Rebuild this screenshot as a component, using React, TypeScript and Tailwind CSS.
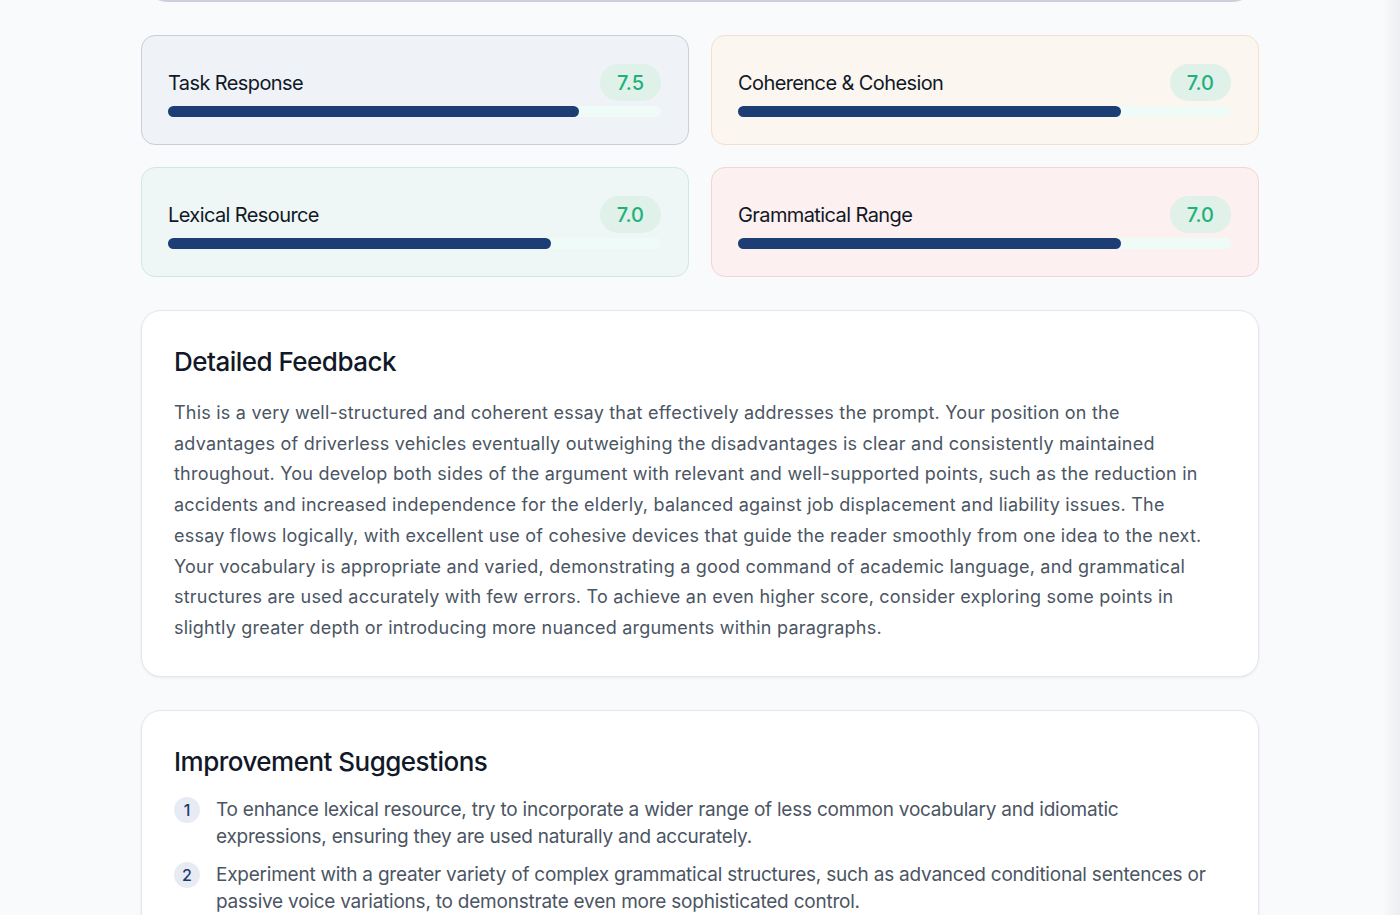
import React from 'react';

interface Criterion {
  name: string;
  score: number;
  card: string;
}

const criteria: Criterion[] = [
  { name: 'Task Response', score: 7.5, card: 'bg-[#eff2f6] border-[#c9ced9]' },
  { name: 'Coherence & Cohesion', score: 7.0, card: 'bg-[#fcf6f1] border-[#f6dfca]' },
  { name: 'Lexical Resource', score: 7.0, card: 'bg-[#eef7f5] border-[#cfe9e2]' },
  { name: 'Grammatical Range', score: 7.0, card: 'bg-[#fcf0f0] border-[#f2d5d5]' },
];

// feedback paragraph, kept in the lines it is set in
const feedbackLines = [
  'This is a very well-structured and coherent essay that effectively addresses the prompt. Your position on the',
  'advantages of driverless vehicles eventually outweighing the disadvantages is clear and consistently maintained',
  'throughout. You develop both sides of the argument with relevant and well-supported points, such as the reduction in',
  'accidents and increased independence for the elderly, balanced against job displacement and liability issues. The',
  'essay flows logically, with excellent use of cohesive devices that guide the reader smoothly from one idea to the next.',
  'Your vocabulary is appropriate and varied, demonstrating a good command of academic language, and grammatical',
  'structures are used accurately with few errors. To achieve an even higher score, consider exploring some points in',
  'slightly greater depth or introducing more nuanced arguments within paragraphs.',
];

const suggestions = [
  'To enhance lexical resource, try to incorporate a wider range of less common vocabulary and idiomatic expressions, ensuring they are used naturally and accurately.',
  'Experiment with a greater variety of complex grammatical structures, such as advanced conditional sentences or passive voice variations, to demonstrate even more sophisticated control.',
];

function ScoreCard({ item }: { item: Criterion }) {
  const pct = (item.score / 9) * 100;
  return (
    <div className={`rounded-[14px] border pl-[26px] pr-[27px] pt-[28px] pb-[27px] ${item.card}`}>
      <div className="flex items-center justify-between">
        <span className="text-[20px] text-[#111827] tracking-[-0.03em]">{item.name}</span>
        <span className="h-[37px] px-[17px] rounded-full bg-[#dff1e9] text-[#1fb07b] text-[20px] font-medium flex items-center">
          {item.score.toFixed(1)}
        </span>
      </div>
      <div className="mt-[5px] h-[11px] rounded-full bg-[#effbf7]">
        <div className="h-full rounded-full bg-[#1d3d75]" style={{ width: `${pct}%` }} />
      </div>
    </div>
  );
}

export default function App() {
  return (
    <div
      className="min-h-screen bg-[#f8fafc] relative overflow-hidden"
      style={{ fontFamily: 'Inter, "Noto Sans", sans-serif' }}
    >
      {/* right scroll gutter shade */}
      <div className="absolute top-0 right-0 h-full w-[18px] bg-gradient-to-r from-transparent to-[#eceef1]" />

      <div className="w-[1118px] mx-auto">
        {/* end of the overall band card above */}
        <div className="-mt-[40px] h-[42px] rounded-b-[22px] border-b-2 border-[#cdd0dc] mx-[4px]" />

        <div className="mt-[33px] grid grid-cols-2 gap-[22px]">
          {criteria.map((c) => (
            <ScoreCard key={c.name} item={c} />
          ))}
        </div>

        <div className="mt-[33px] bg-white rounded-[20px] border border-[#e4e6ea] shadow-[0_1px_3px_rgba(0,0,0,0.06)] pl-[32px] pr-[32px] pt-[33px] pb-[32px]">
          <h2 className="text-[26px] font-medium text-[#111827] tracking-[-0.02em] leading-[36px]">Detailed Feedback</h2>
          <p className="mt-[18px] text-[18px] leading-[30.7px] text-[#4b5563] tracking-[0.012em]">
            {feedbackLines.map((line, i) => (
              <span key={i} className="block whitespace-nowrap">{line}</span>
            ))}
          </p>
        </div>

        <div className="mt-[33px] bg-white rounded-t-[20px] border border-[#e4e6ea] shadow-[0_1px_3px_rgba(0,0,0,0.06)] pl-[32px] pr-[44px] pt-[33px] pb-[40px]">
          <h2 className="text-[26px] font-medium text-[#111827] tracking-[-0.02em] leading-[36px]">Improvement Suggestions</h2>
          <ol className="mt-[16px] flex flex-col gap-[11px]">
            {suggestions.map((s, i) => (
              <li key={i} className="flex items-start gap-[16px]">
                <span className="mt-[1px] shrink-0 w-[26px] h-[26px] rounded-full bg-[#e7ecf4] text-[#1e3a6e] text-[16px] font-medium flex items-center justify-center">
                  {i + 1}
                </span>
                <span className="text-[19px] leading-[27px] text-[#4b5563] tracking-[-0.012em]">{s}</span>
              </li>
            ))}
          </ol>
        </div>
      </div>
    </div>
  );
}
